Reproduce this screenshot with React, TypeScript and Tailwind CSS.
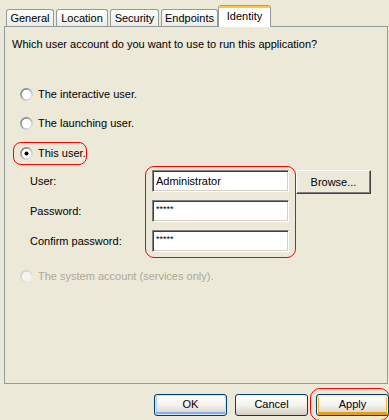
import React from 'react';

const font = { fontFamily: '"Liberation Sans", Arial, sans-serif' };

const Radio: React.FC<{ checked?: boolean; disabled?: boolean }> = ({ checked, disabled }) => (
    <svg width="13" height="13" viewBox="0 0 13 13" className="shrink-0">
        <defs>
            <linearGradient id={disabled ? 'rgd' : 'rg'} x1="0" y1="0" x2="1" y2="1">
                <stop offset="0" stopColor={disabled ? '#c9c7ba' : '#6f6f6f'} />
                <stop offset="1" stopColor={disabled ? '#f4f3ee' : '#f2f2f2'} />
            </linearGradient>
        </defs>
        <circle cx="6.5" cy="6.5" r="5.6" fill={disabled ? '#f4f3ee' : '#ffffff'} stroke={`url(#${disabled ? 'rgd' : 'rg'})`} strokeWidth="1.6" />
        {checked && <circle cx="6.5" cy="6.5" r="2" fill="#000" />}
    </svg>
);

const Tab: React.FC<{ label: string; active?: boolean; w: string }> = ({ label, active, w }) =>
    active ? (
        <div className={`${w} h-[22px] -mb-px -mx-[2px] relative z-10 flex flex-col rounded-t-[3px] border-x border-[#919b9c] bg-white overflow-hidden`}>
            <div className="h-[3px] bg-[#ffc83c] border-t border-[#e68b2c]" />
            <div className="flex-1 flex items-center justify-center pb-[2px]">{label}</div>
        </div>
    ) : (
        <div className={`${w} h-[17px] flex items-center justify-center rounded-t-[3px] border border-b-0 border-[#919b9c] bg-gradient-to-b from-white to-[#ecebe6]`}>
            {label}
        </div>
    );

const TextBox: React.FC<{ value: string; pw?: boolean }> = ({ value, pw }) => (
    <div className="w-[137px] h-[22px] bg-white border border-t-[#808080] border-l-[#808080] border-b-white border-r-white shadow-[inset_1px_1px_0_#404040,inset_-1px_-1px_0_#d4d0c8] flex items-center px-[3px]">
        <span className={pw ? 'text-[9px] leading-none -mt-[4px]' : ''}>{value}</span>
    </div>
);

const XpButton: React.FC<{ label: string; kind?: 'default' | 'hover' }> = ({ label, kind }) => {
    const inner =
        kind === 'default'
            ? 'shadow-[inset_0_0_0_1px_#cee7ff,inset_0_-2px_0_1px_#89ade4,inset_2px_0_0_0_#bcd4f6]'
            : kind === 'hover'
            ? 'shadow-[inset_0_1px_0_1px_#fff0cf,inset_0_-2px_0_1px_#e5a01a,inset_2px_0_0_0_#f8b330,inset_-2px_0_0_0_#f8b330]'
            : '';
    return (
        <button className={`w-[73px] h-[22px] shrink-0 rounded-[3px] border border-[#003c74] bg-gradient-to-b from-white via-[#f3f2ee] to-[#d6d0c5] text-black ${inner}`}>
            {label}
        </button>
    );
};

export default function App() {
    return (
        <div style={font} className="w-[389px] h-[420px] bg-[#ece9d8] text-[11px] text-black overflow-hidden pt-[5px] select-none">
            {/* tabs */}
            <div className="flex items-end gap-[2px] pl-[6px] h-[21px]">
                <Tab label="General" w="w-[48px]" />
                <Tab label="Location" w="w-[52px]" />
                <Tab label="Security" w="w-[49px]" />
                <Tab label="Endpoints" w="w-[57px]" />
                <Tab label="Identity" w="w-[53px]" active />
            </div>

            {/* page */}
            <div className="ml-[4px] w-[384px] h-[358px] border border-[#919b9c] bg-[#ece9d8] px-[7px] pt-[10px]">
                <div className="leading-[14px]">Which user account do you want to use to run this application?</div>

                <div className="flex flex-col mt-[37px] pl-[8px]">
                    <div className="flex items-center gap-[5px] h-[13px]">
                        <Radio />
                        <span>The interactive user.</span>
                    </div>
                    <div className="flex items-center gap-[5px] h-[13px] mt-[16px]">
                        <Radio />
                        <span>The launching user.</span>
                    </div>
                    <div className="-ml-[7px] mt-[12px] w-[74px] h-[23px] border border-[#ff0000] rounded-[8px] flex items-center gap-[5px] pl-[6px]">
                        <Radio checked />
                        <span>This user.</span>
                    </div>
                </div>

                <div className="flex mt-[1px]">
                    <div className="w-[133px] pl-[18px] pt-[9px] flex flex-col gap-[17px] leading-[13px]">
                        <span>User:</span>
                        <span>Password:</span>
                        <span>Confirm password:</span>
                    </div>
                    <div className="w-[151px] h-[92px] border border-[#ff0000] rounded-[9px] flex flex-col gap-[8px] pl-[6px] pt-[3px]">
                        <TextBox value="Administrator" />
                        <TextBox value="*****" pw />
                        <TextBox value="*****" pw />
                    </div>
                    <button className="mt-[4px] w-[75px] h-[24px] shrink-0 bg-[#ece9d8] border border-t-white border-l-white border-b-[#404040] border-r-[#404040] shadow-[inset_-1px_-1px_0_#808080]">
                        Browse...
                    </button>
                </div>

                <div className="flex items-center gap-[5px] h-[13px] pl-[8px] mt-[12px] text-[#aca899]">
                    <Radio disabled />
                    <span>The system account (services only).</span>
                </div>
            </div>

            {/* buttons */}
            <div className="flex items-center mt-[4px] pl-[154px]">
                <XpButton label="OK" kind="default" />
                <div className="ml-[8px]">
                    <XpButton label="Cancel" />
                </div>
                <div className="ml-[2px] w-[80px] h-[33px] shrink-0 border border-[#ff0000] rounded-[10px] flex items-center pl-[5px]">
                    <XpButton label="Apply" kind="hover" />
                </div>
            </div>
        </div>
    );
}
